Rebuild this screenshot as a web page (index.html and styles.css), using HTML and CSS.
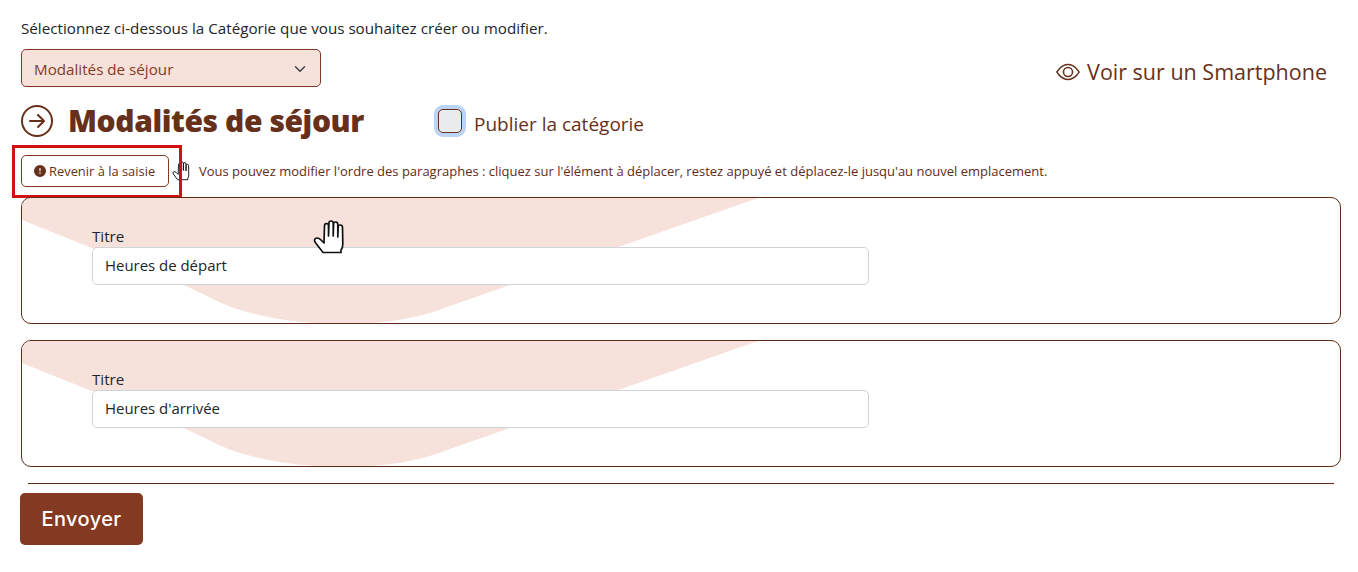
FILE: index.html
```html
<!DOCTYPE html>
<html lang="fr">
<head>
<meta charset="utf-8">
<title>Modalités de séjour</title>
<link rel="stylesheet" href="styles.css">
</head>
<body>
<svg class="defs" width="0" height="0" aria-hidden="true">
  <symbol id="hand" viewBox="0 0 32 34">
    <path d="M10 32.5 L3.5 24 Q0 20 2.5 18.5 Q5 17 8 20 L11 23 L11.5 6 Q11.5 3.5 13.6 3.5 Q15.5 3.5 15.5 6 L15.5 16 L16 3 Q16 1 18 1 Q20.2 1 20.2 3 L20.2 16 L20.6 4 Q20.6 2 22.7 2 Q24.8 2 24.8 4.5 L24.8 17 L25.2 7 Q25.2 5 27.2 5 Q29.5 5 29.5 7.5 L29.8 24 Q29.8 28 28 30 L28 32.5 Z" fill="#fff" stroke="#111" stroke-width="1.7" stroke-linejoin="round"/>
  </symbol>
  <symbol id="wave" viewBox="0 0 760 126" preserveAspectRatio="none">
    <path d="M0 0 H736 L488 87 L425 109 C395 121 360 126 320 126 C285 126 235 121 197 104 L162 87 L0 22 Z" fill="#f7e1db"/>
  </symbol>
</svg>
<main class="page">
  <p class="intro">Sélectionnez ci-dessous la Catégorie que vous souhaitez créer ou modifier.</p>
  <div class="top-row">
    <div class="select">
      <span>Modalités de séjour</span>
      <svg class="chevron" viewBox="0 0 16 16" width="16" height="16"><path d="M2 5l6 6 6-6" fill="none" stroke="#343a40" stroke-width="1.8" stroke-linecap="round" stroke-linejoin="round"/></svg>
    </div>
    <a class="preview">
      <svg viewBox="0 0 16 16" width="24" height="24"><path fill="currentColor" d="M16 8s-3-5.5-8-5.5S0 8 0 8s3 5.5 8 5.5S16 8 16 8zM1.17 8a13 13 0 0 1 1.66-2.04C4.12 4.67 5.88 3.5 8 3.5s3.88 1.17 5.17 2.46A13 13 0 0 1 14.83 8c-.06.08-.12.18-.2.29-.3.43-.73 1-1.46 1.75C11.88 11.33 10.12 12.5 8 12.5s-3.88-1.17-5.17-2.46A13 13 0 0 1 1.17 8z"/><path fill="currentColor" d="M8 5.5a2.5 2.5 0 1 0 0 5 2.5 2.5 0 0 0 0-5zM4.5 8a3.5 3.5 0 1 1 7 0 3.5 3.5 0 0 1-7 0z"/></svg>
      <span>Voir sur un Smartphone</span>
    </a>
  </div>
  <div class="title-row">
    <svg class="circle-arrow" viewBox="0 0 16 16" width="32" height="32"><path fill="currentColor" d="M1 8a7 7 0 1 0 14 0A7 7 0 0 0 1 8zm15 0A8 8 0 1 1 0 8a8 8 0 0 1 16 0zM4.5 7.5a.5.5 0 0 0 0 1h5.79l-2.15 2.15a.5.5 0 0 0 .71.7l3-3a.5.5 0 0 0 0-.7l-3-3a.5.5 0 1 0-.71.7L10.29 7.5H4.5z"/></svg>
    <h1>Modalités de séjour</h1>
    <span class="checkbox"></span>
    <span class="publish">Publier la catégorie</span>
  </div>
  <div class="tool-row">
    <button class="back">
      <svg viewBox="0 0 16 16" width="12" height="12"><path fill="currentColor" d="M16 8A8 8 0 1 1 0 8a8 8 0 0 1 16 0zM8 4a.9.9 0 0 0-.9 1l.35 3.5a.55.55 0 0 0 1.1 0L8.9 5A.9.9 0 0 0 8 4zm0 6a1 1 0 1 0 0 2 1 1 0 0 0 0-2z"/></svg>
      Revenir à la saisie
    </button>
    <svg class="mini-hand" width="18" height="20"><use href="#hand"/></svg>
    <span class="hint">Vous pouvez modifier l'ordre des paragraphes : cliquez sur l'élément à déplacer, restez appuyé et déplacez-le jusqu'au nouvel emplacement.</span>
    <span class="highlight"></span>
  </div>
  <section class="card">
    <svg class="wave"><use href="#wave"/></svg>
    <label class="field">
      <span class="label">Titre</span>
      <span class="input">Heures de départ</span>
    </label>
    <svg class="cursor" width="32" height="34"><use href="#hand"/></svg>
  </section>
  <section class="card">
    <svg class="wave"><use href="#wave"/></svg>
    <label class="field">
      <span class="label">Titre</span>
      <span class="input">Heures d'arrivée</span>
    </label>
  </section>
  <hr class="rule">
  <button class="send">Envoyer</button>
</main>
</body>
</html>
```

FILE: styles.css
```css
* { box-sizing: border-box; }
html, body { margin: 0; padding: 0; background: #fff; }
body { font-family: "Open Sans", "Liberation Sans", sans-serif; color: #212529; }
.defs { position: absolute; }
.page { padding: 0 17px 0 21px; }
.intro { margin: 0; padding-top: 18px; height: 49px; font-size: 15.2px; line-height: 20px; }
.top-row { display: flex; justify-content: space-between; align-items: flex-start; height: 54px; }
.select {
  width: 300px; height: 38px; display: flex; align-items: center; justify-content: space-between;
  padding: 1px 12px 0; background: #f7e1db; border: 1px solid #843a22; border-radius: 5px;
  color: #843a22; font-size: 15.2px;
}
.chevron { transform: scale(.75); }
.preview { display: flex; align-items: center; gap: 7px; margin: 8px 14px 0 0; color: #67301a; font-size: 21.5px; line-height: 30px; }
.title-row { display: flex; align-items: center; height: 36px; margin-bottom: 16px; color: #67301a; }
.circle-arrow { flex: none; color: #67301a; }
h1 { margin: 0 0 0 15px; width: 370px; font-size: 30px; font-weight: 800; letter-spacing: -.42px; line-height: 40px; white-space: nowrap; }
.checkbox {
  width: 24px; height: 24px; margin-right: 12px; background: #e9ecef; border: 1px solid #67301a;
  border-radius: 5px; box-shadow: 0 0 0 4px #bcd3f7;
}
.publish { font-size: 19px; line-height: 26px; padding-top: 6px; }
.tool-row { position: relative; display: flex; align-items: center; height: 32px; margin-bottom: 10px; }
.back {
  display: flex; align-items: center; gap: 3px; flex: none; width: 148px; height: 32px; padding: 0 0 0 12px;
  background: #fff; border: 1px solid #843a22; border-radius: 5px; color: #67301a;
  font: 12.9px "Open Sans", sans-serif; white-space: nowrap;
}
.mini-hand { margin: 0 9px 0 3px; flex: none; }
.hint { font-size: 13px; color: #5f2b18; white-space: nowrap; }
.highlight { position: absolute; left: -9px; top: -10px; width: 170px; height: 53px; border: 3px solid #d40f0f; pointer-events: none; }
.card {
  position: relative; height: 127px; margin-bottom: 16px; padding: 28px 0 0 70px;
  border: 1px solid #5f2b18; border-radius: 10px; overflow: hidden;
}
.wave { position: absolute; left: 0; top: 0; width: 760px; height: 126px; }
.field { position: relative; display: block; width: 777px; }
.label { display: block; font-size: 15.2px; line-height: 21px; }
.input {
  display: block; height: 38px; padding: 0 12px; background: #fff; border: 1px solid #ced4da;
  border-radius: 5px; font-size: 14.95px; line-height: 35px; color: #212529;
}
.cursor { position: absolute; left: 291px; top: 22px; }
.rule { height: 1px; margin: 0 7px 9px; border: 0; background: #5f2b18; }
.send {
  display: block; width: 123px; height: 52px; margin-left: -1px; padding: 0; background: #843a22;
  border: 0; border-radius: 5px; color: #fff; font: 500 20px Inter, sans-serif; letter-spacing: .4px;
}
```
